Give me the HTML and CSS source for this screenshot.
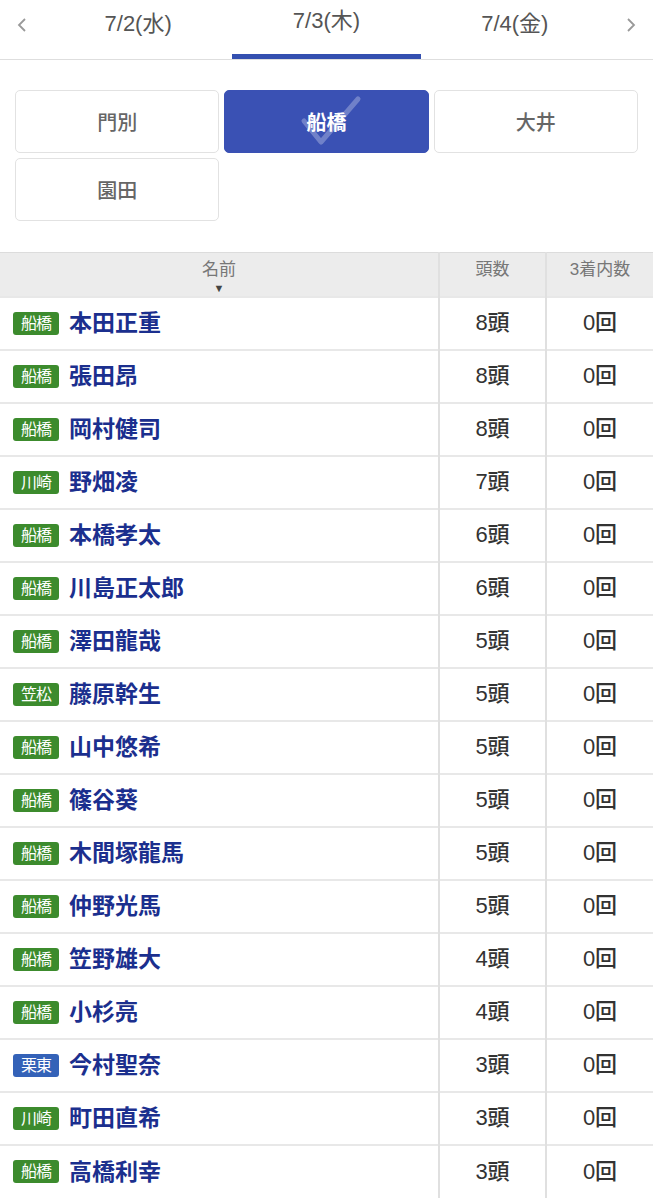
FILE: index.html
```html
<!doctype html>
<html lang="ja">
<head>
  <meta charset="utf-8" />
  <meta name="viewport" content="width=device-width, initial-scale=1"/>
  <title>騎手別 騎乗数</title>
  <link rel="stylesheet" href="styles.css">
</head>
<body>
  <nav class="dates">
    <a class="arrow" href="#"><svg width="12" height="18" viewBox="0 0 12 18"><path d="M9 3L3 9l6 6" fill="none" stroke="#999" stroke-width="1.8"/></svg></a>
    <a class="date" href="#">7/2(水)</a>
    <a class="date active" href="#">7/3(木)</a>
    <a class="date" href="#">7/4(金)</a>
    <a class="arrow" href="#"><svg width="12" height="18" viewBox="0 0 12 18"><path d="M3 3l6 6-6 6" fill="none" stroke="#999" stroke-width="1.8"/></svg></a>
  </nav>

  <section class="venues">
    <button class="venue">門別</button>
    <button class="venue on">
      <svg class="check" width="140" height="60" viewBox="0 0 140 60"><path d="M79 30l17 21 37-43" fill="none" stroke="rgba(255,255,255,.28)" stroke-width="5" stroke-linecap="round" stroke-linejoin="round"/></svg>
      <span>船橋</span>
    </button>
    <button class="venue">大井</button>
    <button class="venue">園田</button>
  </section>

  <table class="list">
    <colgroup><col class="c-name"><col class="c-num"><col class="c-num"></colgroup>
    <thead>
      <tr><th class="name-h">名前<span class="sort">▼</span></th><th>頭数</th><th>3着内数</th></tr>
    </thead>
    <tbody id="rows"></tbody>
  </table>

  <script>
  const data = [
    ["船橋","本田正重",8],["船橋","張田昂",8],["船橋","岡村健司",8],["川崎","野畑凌",7],
    ["船橋","本橋孝太",6],["船橋","川島正太郎",6],["船橋","澤田龍哉",5],["笠松","藤原幹生",5],
    ["船橋","山中悠希",5],["船橋","篠谷葵",5],["船橋","木間塚龍馬",5],["船橋","仲野光馬",5],
    ["船橋","笠野雄大",4],["船橋","小杉亮",4],["栗東","今村聖奈",3],["川崎","町田直希",3],
    ["船橋","高橋利幸",3]
  ];
  const tb = document.getElementById("rows");
  tb.innerHTML = data.map(([v,n,c]) =>
    `<tr><td class="name"><span class="tag${v==="栗東"?" jra":""}">${v}</span><a href="#">${n}</a></td>` +
    `<td class="num">${c}頭</td><td class="num">0回</td></tr>`).join("");
  </script>
</body>
</html>
```

FILE: styles.css
```css
*,*::before,*::after{box-sizing:border-box}
body{margin:0;font-family:"Liberation Sans","Noto Sans CJK JP",sans-serif;background:#fff;color:#333}
a{text-decoration:none}

.dates{display:grid;grid-template-columns:44px 1fr 1fr 1fr 44px;height:60px;border-bottom:1px solid #dedede}
.arrow{display:flex;align-items:center;justify-content:center;padding-bottom:10px}
.date{display:flex;justify-content:center;padding-top:10px;font-size:22px;line-height:28px;color:#555;border-bottom:5px solid transparent}
.date.active{padding-top:7px;border-bottom-color:#3450b0}

.venues{display:grid;grid-template-columns:repeat(3,1fr);gap:5px;padding:30px 15px 31px}
.venue{position:relative;height:63px;border:1px solid #e2e2e2;border-radius:5px;background:#fff;color:#666;font:inherit;font-size:20px;font-weight:500}
.venue.on{background:#3a51b4;border-color:#3a51b4;color:#fff;font-weight:700}
.venue span{position:relative}
.check{position:absolute;left:0;top:0}

.list{width:100%;border-collapse:collapse;table-layout:fixed}
.c-name{width:439px}
.list th{height:44px;background:#ececec;border-top:1px solid #dcdcdc;border-left:2px solid #e0e0e0;color:#777;font-size:17px;line-height:20px;font-weight:400;vertical-align:top;padding:7px 0 0}
.list th:first-child{border-left:none}
.sort{display:block;font-size:11px;color:#444;line-height:12px;margin-top:2px}
.list td{height:53px;border-top:2px solid #e8e8e8;border-left:2px solid #e0e0e0;padding:0}
.list td:first-child{border-left:none}
.name{padding-left:13px !important;white-space:nowrap}
.name a{font-size:23px;line-height:28px;font-weight:700;color:#1b2f8e;vertical-align:middle}
.tag{display:inline-block;width:46px;height:23px;line-height:23px;margin-right:10px;border-radius:3px;background:#3c8b2d;color:#fff;font-size:16px;letter-spacing:-1px;text-align:center;vertical-align:middle}
.tag.jra{background:#3462b8}
.num{text-align:center;font-size:22px;line-height:28px;font-weight:500;color:#333}
```
